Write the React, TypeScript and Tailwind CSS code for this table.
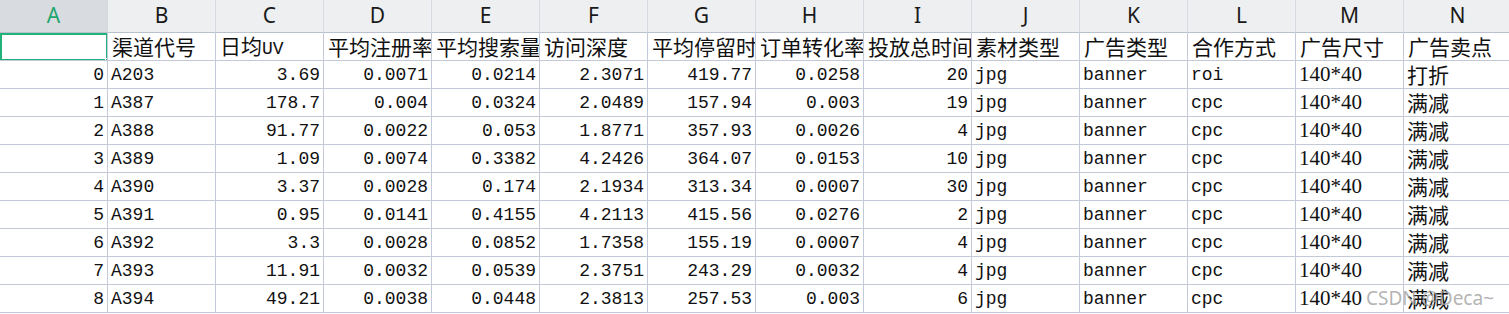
import React from "react";

const cols = ["A", "B", "C", "D", "E", "F", "G", "H", "I", "J", "K", "L", "M", "N"];

const headerRow = ["", "渠道代号", "日均UV", "平均注册率", "平均搜索量", "访问深度", "平均停留时间", "订单转化率", "投放总时间", "素材类型", "广告类型", "合作方式", "广告尺寸", "广告卖点"];

const rows: (string | number)[][] = [
  [0, "A203", "3.69", "0.0071", "0.0214", "2.3071", "419.77", "0.0258", "20", "jpg", "banner", "roi", "140*40", "打折"],
  [1, "A387", "178.7", "0.004", "0.0324", "2.0489", "157.94", "0.003", "19", "jpg", "banner", "cpc", "140*40", "满减"],
  [2, "A388", "91.77", "0.0022", "0.053", "1.8771", "357.93", "0.0026", "4", "jpg", "banner", "cpc", "140*40", "满减"],
  [3, "A389", "1.09", "0.0074", "0.3382", "4.2426", "364.07", "0.0153", "10", "jpg", "banner", "cpc", "140*40", "满减"],
  [4, "A390", "3.37", "0.0028", "0.174", "2.1934", "313.34", "0.0007", "30", "jpg", "banner", "cpc", "140*40", "满减"],
  [5, "A391", "0.95", "0.0141", "0.4155", "4.2113", "415.56", "0.0276", "2", "jpg", "banner", "cpc", "140*40", "满减"],
  [6, "A392", "3.3", "0.0028", "0.0852", "1.7358", "155.19", "0.0007", "4", "jpg", "banner", "cpc", "140*40", "满减"],
  [7, "A393", "11.91", "0.0032", "0.0539", "2.3751", "243.29", "0.0032", "4", "jpg", "banner", "cpc", "140*40", "满减"],
  [8, "A394", "49.21", "0.0038", "0.0448", "2.3813", "257.53", "0.003", "6", "jpg", "banner", "cpc", "140*40", "满减"],
];

const cjkFont = "font-['Noto_Sans_CJK_SC',sans-serif] text-[21px]";
const monoFont = "font-['Liberation_Mono','Noto_Sans_CJK_SC',monospace] text-[18px]";
const serifFont = "font-['Liberation_Serif',serif] text-[21px]";

function isCjk(s: string) {
  return /[\u4e00-\u9fff]/.test(s);
}

function HeaderText({ text }: { text: string }) {
  if (text === "日均UV") {
    return (
      <span>
        <span className={cjkFont}>日均</span>
        <span className={monoFont}>UV</span>
      </span>
    );
  }
  return <span className={cjkFont}>{text}</span>;
}

export default function App() {
  return (
    <div className="relative w-[1509px] h-[314px] overflow-hidden bg-white text-[#111]">
      <div className="grid grid-cols-[repeat(14,108px)] grid-rows-[33px_repeat(10,28px)]">
        {cols.map((c, i) => (
          <div
            key={c}
            className={`flex items-center justify-center border-b border-r border-b-[#b9c0ce] border-r-[#d6d9df] font-['Noto_Sans',sans-serif] text-[21px] ${
              i === 0 ? "bg-[#d8dbe0] text-[#21a56c]" : "bg-[#eeeff1] text-[#1a1a1a]"
            }`}
          >
            {c}
          </div>
        ))}
        {headerRow.map((t, i) => (
          <div
            key={"h" + i}
            className="relative flex items-center overflow-hidden whitespace-nowrap border-b border-r border-[#c3c9d8] pl-[4px] leading-none"
          >
            {i === 0 ? (
              <div className="absolute -left-px -top-px w-[110px] h-[30px] border-[3px] border-[#21b27a]">
                <div className="absolute right-[-5px] bottom-[-5px] w-[6px] h-[6px] bg-[#21b27a] border border-white" />
              </div>
            ) : (
              <HeaderText text={t} />
            )}
          </div>
        ))}
        {rows.map((r, ri) =>
          r.map((v, ci) => {
            const s = String(v);
            const right = ci === 0 || (ci >= 2 && ci <= 8);
            const font = ci === 12 ? serifFont : isCjk(s) ? cjkFont : monoFont;
            return (
              <div
                key={ri + "-" + ci}
                className={`flex items-center overflow-hidden whitespace-nowrap border-b border-r border-[#c3c9d8] leading-none ${
                  right ? "justify-end pr-[3px]" : "justify-start pl-[3px]"
                } ${font}`}
              >
                {s}
              </div>
            );
          })
        )}
      </div>
      <div className="absolute left-[1366px] top-[289px] font-['Noto_Sans',sans-serif] text-[19px] leading-none text-[#a0a0a0]/80 pointer-events-none">
        CSDN @Deca~
      </div>
    </div>
  );
}
